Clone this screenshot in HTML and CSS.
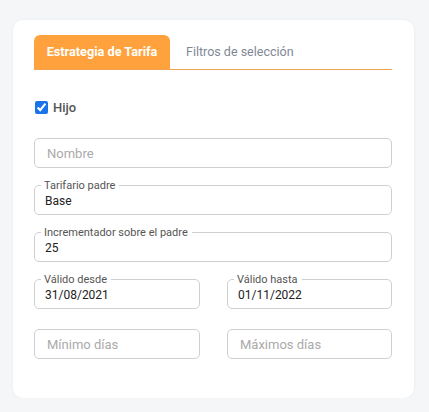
FILE: index.html
```html
<!DOCTYPE html>
<html lang="es">
<head>
<meta charset="utf-8">
<link rel="stylesheet" href="styles.css">
</head>
<body>
<div class="card">
  <div class="tabs">
    <div class="tab active">Estrategia de Tarifa</div>
    <div class="tab">Filtros de selección</div>
  </div>
  <label class="check-row">
    <input type="checkbox" checked>
    <span>Hijo</span>
  </label>
  <div class="form">
    <div class="field plain"><span class="placeholder">Nombre</span></div>
    <fieldset class="field">
      <legend>Tarifario padre</legend>
      <div class="value">Base</div>
    </fieldset>
    <fieldset class="field">
      <legend>Incrementador sobre el padre</legend>
      <div class="value">25</div>
    </fieldset>
    <div class="row">
      <fieldset class="field">
        <legend>Válido desde</legend>
        <div class="value">31/08/2021</div>
      </fieldset>
      <fieldset class="field">
        <legend>Válido hasta</legend>
        <div class="value">01/11/2022</div>
      </fieldset>
    </div>
    <div class="row row-last">
      <div class="field plain"><span class="placeholder">Mínimo días</span></div>
      <div class="field plain"><span class="placeholder">Máximos días</span></div>
    </div>
  </div>
</div>
</body>
</html>
```

FILE: styles.css
```css
* { box-sizing: border-box; }
html, body {
  margin: 0;
  padding: 0;
  background: #f5f6f8;
  font-family: Roboto, "Liberation Sans", sans-serif;
}
.card {
  margin: 20px 0 0 13px;
  width: 401px;
  height: 378px;
  background: #fff;
  border-radius: 10px;
  box-shadow: 0 0 3px rgba(0, 0, 0, 0.06);
  padding: 15px 22px 0 21px;
}
.tabs {
  display: flex;
  height: 35px;
  border-bottom: 1px solid #f2a352;
}
.tab {
  height: 34px;
  line-height: 33px;
  padding: 0 16px;
  font-size: 12.5px;
  color: #808896;
}
.tab.active {
  width: 136px;
  padding: 0;
  text-align: center;
  background: #ffa23d;
  color: #fff;
  font-size: 12.7px;
  font-weight: 700;
  border-radius: 6px 6px 0 0;
}
.check-row {
  display: flex;
  align-items: center;
  margin-top: 30px;
  height: 14px;
  gap: 5px;
  font-size: 13px;
  font-weight: 500;
  color: #555;
}
.check-row input {
  width: 13px;
  height: 13px;
  margin: 0 0 0 1px;
  accent-color: #1a73e8;
}
.form {
  margin-top: 24px;
  display: flex;
  flex-direction: column;
}
.field {
  margin: 0;
  border: 1px solid #cfcfcf;
  border-radius: 5px;
  min-width: 0;
}
.field.plain {
  height: 30px;
  padding: 0 12px;
  display: flex;
  align-items: center;
}
fieldset.field {
  padding: 1px 10px 4px 6px;
  margin-top: 11px;
}
legend {
  font-size: 11px;
  line-height: 13px;
  padding: 0 4px 0 3px;
  color: #555;
}
.value {
  font-size: 12px;
  line-height: 17px;
  padding-left: 4px;
  color: #222;
}
.placeholder {
  font-size: 13px;
  color: #aaa;
}
.row {
  display: grid;
  grid-template-columns: 166px 165px;
  column-gap: 27px;
}
.row-last { margin-top: 20px; }
```
